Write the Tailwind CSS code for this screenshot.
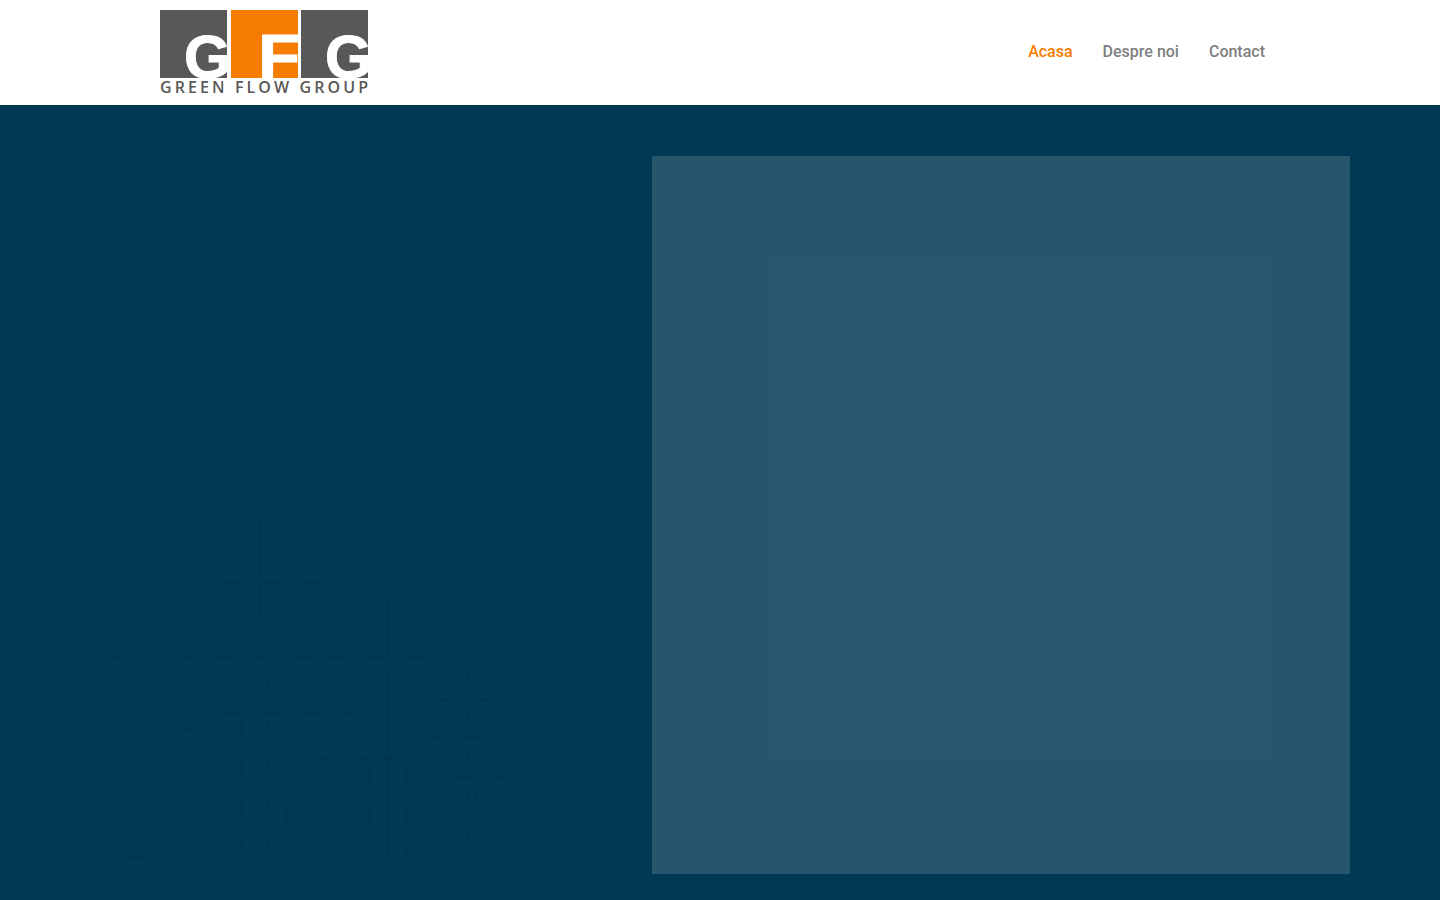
<!DOCTYPE html>
<html lang="ro">
<head>
  <meta charset="UTF-8" />
  <meta name="viewport" content="width=device-width, initial-scale=1.0"/>
  <title>Green Flow Group</title>
  <script src="https://cdn.jsdelivr.net/npm/@tailwindcss/browser@4"></script>
</head>
<body class="h-screen overflow-hidden bg-[#013853] font-['Roboto',sans-serif]">
  <header class="h-[105px] bg-white flex items-center justify-between pl-[160px] pr-[175px]">
    <a href="#" class="block">
      <svg width="210" height="86" viewBox="160 10 210 86" class="block" role="img" aria-label="Green Flow Group">
        <defs>
          <clipPath id="logoBoxes"><rect x="160" y="10" width="208" height="68"/></clipPath>
        </defs>
        <rect x="160" y="10" width="67" height="68" fill="#595857"/>
        <rect x="231" y="10" width="67" height="68" fill="#f57c00"/>
        <rect x="301" y="10" width="67" height="68" fill="#595857"/>
        <g clip-path="url(#logoBoxes)" fill="#fff" stroke="#fff" stroke-width="1" font-family="'Liberation Sans',sans-serif" font-weight="700">
          <text x="184" y="78" font-size="62" textLength="47" lengthAdjust="spacingAndGlyphs">G</text>
          <text x="258" y="78" font-size="63" textLength="42" lengthAdjust="spacingAndGlyphs">F</text>
          <text x="325" y="78" font-size="62" textLength="47" lengthAdjust="spacingAndGlyphs">G</text>
        </g>
        <text x="160" y="93" font-size="16" font-weight="600" fill="#595857" font-family="'Open Sans',sans-serif" textLength="208">GREEN FLOW GROUP</text>
      </svg>
    </a>
    <nav class="flex items-center gap-[30px] text-base font-medium text-[#808080] -translate-y-px">
      <a href="#" class="text-[#f57c00]">Acasa</a>
      <a href="#">Despre noi</a>
      <a href="#">Contact</a>
    </nav>
  </header>

  <main class="flex items-start pt-[51px] pr-[90px]">
    <div class="w-[652px] shrink-0">
      <!-- textura abia vizibila din fundal -->
      <svg width="652" height="744" viewBox="0 156 652 744" class="block" fill="none" stroke="#002f48" stroke-opacity="0.2" stroke-width="3" stroke-dasharray="7 3" aria-hidden="true">
        <path d="M198 603H233M223 583H337M185 657H313M327 657H433M213 713H353M185 730H227M320 758H393M410 700H497M403 738H507M437 778H507M88 560H127M93 658H127M107 857H150"/>
        <path d="M260 523V623M388 603V657M267 660V867M242 720V850M287 787V853M467 663V860M388 673V860M370 767V853M407 767V860M477 783V833"/>
      </svg>
    </div>
    <section class="w-[698px] h-[718px] bg-white/15"></section>
  </main>
</body>
</html>
